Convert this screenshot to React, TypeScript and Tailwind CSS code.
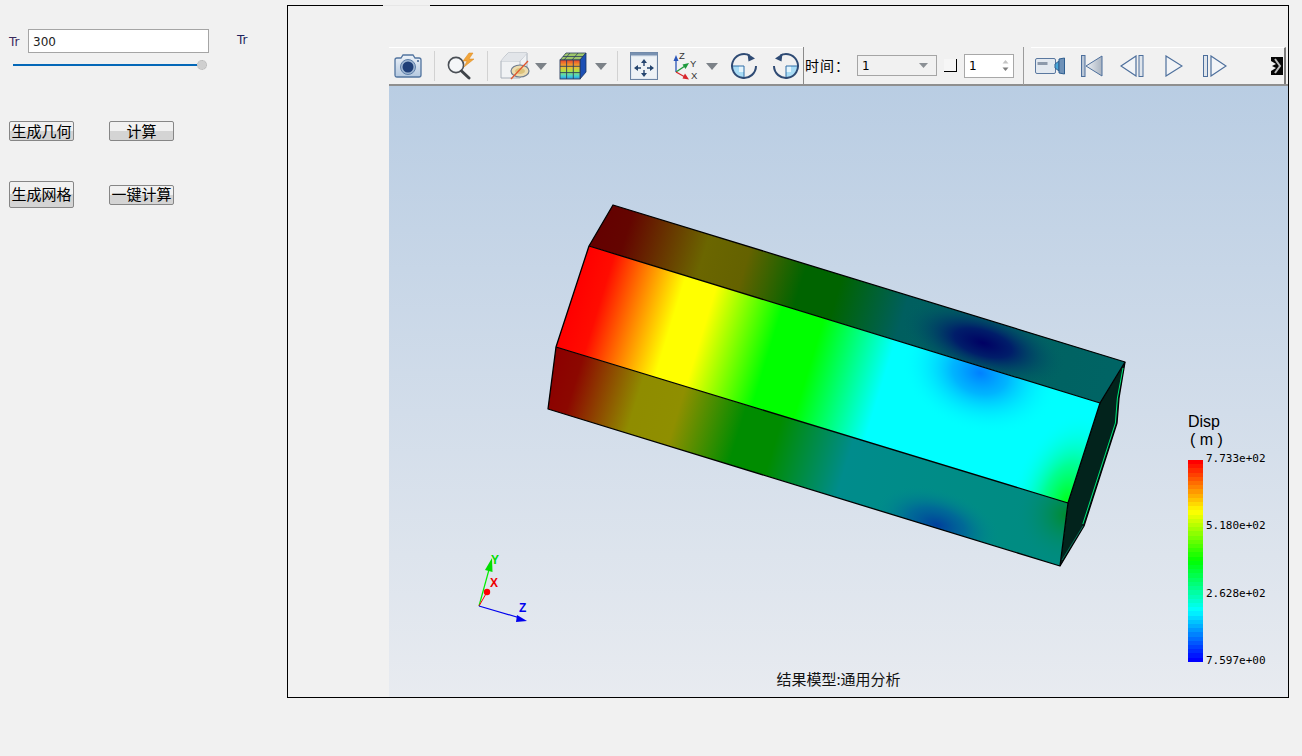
import React from 'react';

const cjk = "font-['Noto_Sans_CJK_SC','Liberation_Sans',sans-serif]";

const bandColor = (t: number) => {
  // t: 0 at the top (red), 1 at the bottom (blue)
  const s = Math.min(t * 4, 3.999);
  const k = s - Math.floor(s);
  const v = Math.round(k * 255);
  if (s < 1) return `rgb(255,${v},0)`;
  if (s < 2) return `rgb(${255 - v},255,0)`;
  if (s < 3) return `rgb(0,255,${v})`;
  return `rgb(0,${255 - v},255)`;
};

const bands = Array.from({ length: 48 }, (_, i) => bandColor(i / 47));

const Sep = ({ className = '' }: { className?: string }) => (
  <div className={`w-px h-[30px] bg-[#d2d2d2] shrink-0 ${className}`} />
);

const Caret = ({ className = '' }: { className?: string }) => (
  <svg viewBox="0 0 12 7" className={`w-[12px] h-[7px] shrink-0 ${className}`}>
    <path d="M0 0H12L6 7Z" fill="#7c8288" />
  </svg>
);

const CameraIcon = () => (
  <svg viewBox="0 0 28 26" className="w-[28px] h-[26px] ml-[5px] shrink-0">
    <defs>
      <linearGradient id="camBody" x1="0" y1="0" x2="0" y2="1">
        <stop offset="0" stopColor="#eef3f9" />
        <stop offset="1" stopColor="#b4c8df" />
      </linearGradient>
    </defs>
    <path d="M1 7q0-2 2-2h4l2-3h10l2 3h4q2 0 2 2v15q0 2-2 2H3q-2 0-2-2Z" fill="url(#camBody)" stroke="#52749f" strokeWidth="1.3" />
    <circle cx="14" cy="14" r="7.5" fill="#9fb6d2" stroke="#5d7ea8" />
    <circle cx="14" cy="14" r="5.5" fill="#1f3f78" />
    <circle cx="24" cy="8" r="1" fill="#3d5f8e" />
  </svg>
);

const SearchBoltIcon = () => (
  <svg viewBox="0 0 30 28" className="w-[30px] h-[28px] ml-[12px] shrink-0">
    <circle cx="9" cy="13" r="7.6" fill="#f4f6f8" stroke="#4a4f55" strokeWidth="1.6" />
    <path d="M14.5 19 L22 26" stroke="#3f4348" strokeWidth="3" strokeLinecap="round" />
    <path d="M22 1 L16 9 H20 L17 15 L27 7 H22 L26 1 Z" fill="#f2a53a" stroke="#d9861c" strokeWidth=".5" />
  </svg>
);

const ClipCubeIcon = () => (
  <svg viewBox="0 0 30 28" className="w-[30px] h-[28px] ml-[12px] shrink-0">
    <path d="M1 9 L8 1 H27 V18 L20 26 H1 Z" fill="#f0f2f4" stroke="#a8b0ba" />
    <path d="M1 9 H20 V26 M20 9 L27 1" fill="none" stroke="#b8bfc8" />
    <path d="M1 9 L8 1 H27 L20 9 Z" fill="#e2e5e9" />
    <ellipse cx="20" cy="19" rx="9" ry="6" fill="#ecdcae" stroke="#6f7c8d" strokeWidth="1.2" />
    <ellipse cx="20" cy="19" rx="5" ry="3" fill="#dcc27c" />
    <path d="M28 9 L11 27" stroke="#e0562e" strokeWidth="1.3" />
  </svg>
);

const ColorCubeIcon = () => (
  <svg viewBox="0 0 28 28" className="w-[28px] h-[28px] shrink-0">
    <defs>
      <linearGradient id="cubeFront" x1="0" y1="0" x2="0" y2="1">
        <stop offset="0" stopColor="#e8432c" />
        <stop offset=".35" stopColor="#f4b62e" />
        <stop offset=".6" stopColor="#a5e34a" />
        <stop offset=".85" stopColor="#3fd0d8" />
        <stop offset="1" stopColor="#2a8ae0" />
      </linearGradient>
    </defs>
    <path d="M7 1 H27 L21 8 H1 Z" fill="#9ec66a" stroke="#2d3f5f" strokeWidth=".8" />
    <path d="M11 1 L5 8 M19 1 L13 8 M4 4.5 H24" stroke="#2d3f5f" strokeWidth=".8" />
    <path d="M21 8 L27 1 V20 L21 27 Z" fill="#1c4fb4" stroke="#17325f" strokeWidth=".8" />
    <rect x="1" y="8" width="20" height="19" fill="url(#cubeFront)" stroke="#2d3f5f" strokeWidth=".9" />
    <path d="M7.6 8 V27 M14.3 8 V27 M1 14.3 H21 M1 20.6 H21" stroke="#2d3f5f" strokeWidth=".9" />
  </svg>
);

const FitIcon = () => (
  <svg viewBox="0 0 28 28" className="w-[28px] h-[28px] ml-[12px] shrink-0">
    <rect x=".5" y=".5" width="27" height="27" fill="#e2e9f1" stroke="#6b83a3" />
    <rect x=".5" y=".5" width="27" height="3" fill="#7891b1" />
    <rect x="2" y="5" width="24" height="21" fill="#eef2f6" />
    <path d="M14 7 L11 11 H17 Z M14 25 L11 21 H17 Z M4 16 L8 13 V19 Z M24 16 L20 13 V19 Z" fill="#25456f" />
    <path d="M14 11 V14 M14 18 V21 M8 16 H11 M17 16 H20" stroke="#25456f" strokeWidth="1.4" />
  </svg>
);

const AxesIcon = () => (
  <svg viewBox="0 -2 26 32" className="w-[26px] h-[32px] ml-[15px] shrink-0">
    <path d="M3 20 V8" stroke="#2a55b8" strokeWidth="1.3" />
    <path d="M3 3 L0.5 9 H5.5 Z" fill="#2a55b8" />
    <path d="M3 20 L12 14" stroke="#1e9a3c" strokeWidth="1.3" />
    <path d="M16 11 L9.5 12.5 L12.5 17 Z" fill="#1e9a3c" />
    <path d="M3 20 L12 25" stroke="#d8262c" strokeWidth="1.3" />
    <path d="M16 27.5 L9.5 26.5 L12 21.5 Z" fill="#d8262c" />
    <text x="6" y="7" fontSize="9.5" fill="#333" fontFamily="Liberation Sans, sans-serif">Z</text>
    <text x="17" y="15" fontSize="9.5" fill="#333" fontFamily="Liberation Sans, sans-serif">Y</text>
    <text x="18" y="27" fontSize="9.5" fill="#333" fontFamily="Liberation Sans, sans-serif">X</text>
  </svg>
);

const RotateIcon = ({ mirrored, className = '' }: { mirrored?: boolean; className?: string }) => (
  <svg viewBox="0 0 28 28" className={`w-[28px] h-[28px] shrink-0 ${className}`}>
    <g transform={mirrored ? 'translate(28 0) scale(-1 1)' : undefined}>
      <path d="M14 14 H2 A12 12 0 0 0 14 26 Z" fill="#a9dcf5" />
      <path d="M9 14 H14 V20 H9 Z" fill="#e4f5fd" />
      <path d="M2 14 H14 V26" fill="none" stroke="#2f6ea8" strokeWidth="1" />
      <path d="M19.5 3.3 A12 12 0 1 0 26 14" fill="none" stroke="#2f4b74" strokeWidth="2" />
      <path d="M17.5 1.5 L25 6.5 L18.5 9.5 Z" fill="#2f4b74" />
    </g>
  </svg>
);

const RecordIcon = () => (
  <svg viewBox="0 0 30 18" className="w-[30px] h-[18px] ml-[4px] shrink-0">
    <rect x=".5" y="1.5" width="20" height="15" rx="1.5" fill="#e3e9f0" stroke="#5a789f" />
    <rect x="2.5" y="5" width="10" height="3" fill="#8d9aab" />
    <path d="M20 7 L24 4 V14 L20 11 Z" fill="#4aa6d8" stroke="#2f5f90" />
    <path d="M24 2 L29.5 1 V17 L24 16 Z" fill="#6f92b8" stroke="#2f5f90" />
  </svg>
);

const navStroke = '#4d6f9c';

const FirstIcon = () => (
  <svg viewBox="0 0 22 22" className="w-[22px] h-[22px] ml-[16px] shrink-0">
    <defs>
      <linearGradient id="navFill" x1="0" y1="0" x2="1" y2="0">
        <stop offset="0" stopColor="#eef1f5" />
        <stop offset="1" stopColor="#a9b3c0" />
      </linearGradient>
    </defs>
    <rect x=".5" y=".5" width="3.5" height="21" fill="#b9c6d6" stroke={navStroke} />
    <path d="M5 11 L21 1 V21 Z" fill="url(#navFill)" stroke={navStroke} />
  </svg>
);

const BackIcon = () => (
  <svg viewBox="0 0 24 22" className="w-[24px] h-[22px] ml-[17px] shrink-0">
    <path d="M1 11 L16 1 V21 Z" fill="#f2f4f7" stroke={navStroke} strokeWidth="1.2" />
    <rect x="19" y=".5" width="4" height="21" fill="#dfe5ec" stroke={navStroke} />
  </svg>
);

const PlayIcon = () => (
  <svg viewBox="0 0 18 22" className="w-[18px] h-[22px] ml-[21px] shrink-0">
    <path d="M1 1 L17 11 L1 21 Z" fill="#f2f4f7" stroke={navStroke} strokeWidth="1.2" />
  </svg>
);

const NextIcon = () => (
  <svg viewBox="0 0 24 22" className="w-[24px] h-[22px] ml-[20px] shrink-0">
    <rect x=".5" y=".5" width="4" height="21" fill="#dfe5ec" stroke={navStroke} />
    <path d="M8 1 L23 11 L8 21 Z" fill="#f2f4f7" stroke={navStroke} strokeWidth="1.2" />
  </svg>
);

const Toolbar = () => (
  <div className="flex h-[39px] shrink-0 bg-[#f1f1f1] border-b-2 border-[#8f8f8f]">
    <div className="flex items-center w-[414px] shrink-0 border-t border-white">
      <CameraIcon />
      <Sep className="ml-[12px]" />
      <SearchBoltIcon />
      <Sep className="ml-[10px]" />
      <ClipCubeIcon />
      <Caret className="ml-[5px]" />
      <div className="w-[12px] shrink-0" />
      <ColorCubeIcon />
      <Caret className="ml-[8px]" />
      <Sep className="ml-[10px]" />
      <FitIcon />
      <AxesIcon />
      <Caret className="ml-[7px]" />
      <RotateIcon className="ml-[12px]" />
      <RotateIcon mirrored className="ml-[14px]" />
    </div>
    <div className="flex items-center w-[220px] shrink-0 border-l border-[#8a8a8a]">
      <span className={`${cjk} text-[14px] tracking-[1px] text-black ml-[1px] w-[52px] shrink-0`}>时间：</span>
      <div className="flex items-center justify-between w-[80px] h-[21px] border border-[#a5a5a5] px-[4px] shrink-0">
        <span className="font-['DejaVu_Sans',sans-serif] text-[12px] text-black">1</span>
        <svg viewBox="0 0 9 5" className="w-[9px] h-[5px] mr-[4px]">
          <path d="M0 0H9L4.5 5Z" fill="#8a8f94" />
        </svg>
      </div>
      <div className="w-[13px] h-[13px] ml-[7px] shrink-0 bg-[#f6f6f6] border-r border-b border-black" />
      <div className="flex items-center justify-between w-[50px] h-[24px] ml-[7px] bg-white border border-[#a8a8a8] pl-[4px] pr-[4px] shrink-0">
        <span className="font-['DejaVu_Sans',sans-serif] text-[12px] text-black">1</span>
        <svg viewBox="0 0 7 13" className="w-[7px] h-[13px]">
          <path d="M3.5 1 L6.5 4.5 H.5 Z" fill="#c4c4c4" />
          <path d="M.5 8.5 H6.5 L3.5 12 Z" fill="#7e7e7e" />
        </svg>
      </div>
      <div className="w-px h-[38px] ml-[9px] bg-[#9c9c9c] shrink-0" />
    </div>
    <div className="flex items-center w-[255px] ml-[8px] shrink-0 border-t border-white border-r-2 border-r-[#7a7a7a]">
      <RecordIcon />
      <FirstIcon />
      <BackIcon />
      <PlayIcon />
      <NextIcon />
      <svg viewBox="0 0 12 18" className="w-[12px] h-[18px] ml-auto mr-[1px] shrink-0">
        <path d="M0 0H12V18H0V14L5 11 L1 9 L5 7 L0 4Z" fill="#050505" />
        <path d="M4 2 L9 9 L4 16" fill="none" stroke="#bdbdbd" strokeWidth="2" />
      </svg>
    </div>
  </div>
);

// 3D result model, drawn in page coordinates through the viewBox
const ResultModel = () => (
  <svg viewBox="389 86 899 611" className="absolute inset-0 w-full h-full">
    <defs>
      <linearGradient id="frontFace" gradientUnits="userSpaceOnUse" x1="589" y1="246" x2="1100" y2="403">
        <stop offset="0" stopColor="#ff0000" />
        <stop offset=".05" stopColor="#ff0c00" />
        <stop offset=".19" stopColor="#ffff00" />
        <stop offset=".25" stopColor="#ffff00" />
        <stop offset=".38" stopColor="#00ff00" />
        <stop offset=".46" stopColor="#00ff00" />
        <stop offset=".6" stopColor="#00ffff" />
        <stop offset="1" stopColor="#00ffff" />
      </linearGradient>
      <linearGradient id="topFace" gradientUnits="userSpaceOnUse" x1="589" y1="246" x2="1100" y2="403">
        <stop offset="0" stopColor="#640000" />
        <stop offset=".06" stopColor="#640500" />
        <stop offset=".21" stopColor="#6b6600" />
        <stop offset=".29" stopColor="#646200" />
        <stop offset=".4" stopColor="#006400" />
        <stop offset=".47" stopColor="#006400" />
        <stop offset=".6" stopColor="#005f5f" />
        <stop offset="1" stopColor="#006464" />
      </linearGradient>
      <linearGradient id="bottomFace" gradientUnits="userSpaceOnUse" x1="589" y1="246" x2="1100" y2="403">
        <stop offset="0" stopColor="#8c0000" />
        <stop offset=".05" stopColor="#8c0800" />
        <stop offset=".17" stopColor="#8f8c00" />
        <stop offset=".25" stopColor="#8f8f00" />
        <stop offset=".37" stopColor="#008c00" />
        <stop offset=".44" stopColor="#008c00" />
        <stop offset=".58" stopColor="#008c8c" />
        <stop offset="1" stopColor="#008c80" />
      </linearGradient>
      <radialGradient id="frontSpot" gradientUnits="userSpaceOnUse" cx="980" cy="373" r="62" gradientTransform="translate(980 373) rotate(17) scale(1.3 .95) translate(-980 -373)">
        <stop offset="0" stopColor="#0080ff" />
        <stop offset=".35" stopColor="#00a8ff" stopOpacity=".85" />
        <stop offset="1" stopColor="#00ffff" stopOpacity="0" />
      </radialGradient>
      <radialGradient id="frontCorner" gradientUnits="userSpaceOnUse" cx="1066" cy="500" r="70" gradientTransform="translate(1066 500) rotate(-72) scale(1.3 .8) translate(-1066 -500)">
        <stop offset="0" stopColor="#00ff20" />
        <stop offset=".4" stopColor="#00ff80" stopOpacity=".85" />
        <stop offset="1" stopColor="#00ffff" stopOpacity="0" />
      </radialGradient>
      <radialGradient id="topSpot" gradientUnits="userSpaceOnUse" cx="983" cy="343" r="85" gradientTransform="translate(983 343) rotate(17) scale(1 .42) translate(-983 -343)">
        <stop offset="0" stopColor="#000064" />
        <stop offset=".35" stopColor="#001a6a" stopOpacity=".95" />
        <stop offset="1" stopColor="#005f64" stopOpacity="0" />
      </radialGradient>
      <radialGradient id="bottomSpot" gradientUnits="userSpaceOnUse" cx="937" cy="525" r="65" gradientTransform="translate(937 525) rotate(17) scale(1 .55) translate(-937 -525)">
        <stop offset="0" stopColor="#003f9c" />
        <stop offset=".45" stopColor="#005f9c" stopOpacity=".75" />
        <stop offset="1" stopColor="#008c8c" stopOpacity="0" />
      </radialGradient>
      <radialGradient id="bottomCorner" gradientUnits="userSpaceOnUse" cx="1066" cy="515" r="50">
        <stop offset="0" stopColor="#008c30" />
        <stop offset="1" stopColor="#008c80" stopOpacity="0" />
      </radialGradient>
      <clipPath id="frontClip"><path d="M589 246 L1100 403 L1068 503 L556 347 Z" /></clipPath>
      <clipPath id="topClip"><path d="M613 205 L1125 362 L1100 403 L589 246 Z" /></clipPath>
      <clipPath id="bottomClip"><path d="M556 347 L1068 503 L1060 566 L548 409 Z" /></clipPath>
    </defs>

    <path d="M1125 362 L1119 398 L1117 423 L1084 526 L1060 566 L1068 503 L1100 403 Z" fill="#02231c" />

    <path d="M613 205 L1125 362 L1100 403 L589 246 Z" fill="url(#topFace)" />
    <g clipPath="url(#topClip)"><rect x="850" y="250" width="280" height="160" fill="url(#topSpot)" /></g>

    <path d="M589 246 L1100 403 L1068 503 L556 347 Z" fill="url(#frontFace)" />
    <g clipPath="url(#frontClip)">
      <rect x="850" y="300" width="260" height="210" fill="url(#frontSpot)" />
      <rect x="950" y="380" width="160" height="130" fill="url(#frontCorner)" />
    </g>

    <path d="M556 347 L1068 503 L1060 566 L548 409 Z" fill="url(#bottomFace)" />
    <g clipPath="url(#bottomClip)">
      <rect x="840" y="470" width="200" height="100" fill="url(#bottomSpot)" />
      <rect x="1010" y="480" width="60" height="90" fill="url(#bottomCorner)" />
    </g>

    <g fill="none" stroke="#000" strokeWidth="1.3" strokeLinejoin="round">
      <path d="M613 205 L1125 362 L1119 398 L1117 423 L1084 526 L1060 566 L548 409 L556 347 L589 246 Z" />
      <path d="M589 246 L1100 403 L1068 503 L556 347" />
      <path d="M1125 362 L1100 403 M1068 503 L1060 566" />
    </g>
    <path d="M1123 368 L1117.4 398 L1115.4 423 L1082.8 524" fill="none" stroke="#00e67a" strokeWidth="1" />
    <path d="M1083 526 L1062 560" fill="none" stroke="#0b6b55" strokeWidth="1" />

    {/* axis triad */}
    <path d="M479 606 L490 566" stroke="#00ee00" strokeWidth="1.2" />
    <path d="M492 558 L485 570 L492.5 572 Z" fill="#00dd00" />
    <path d="M479 606 L487 592" stroke="#ff0000" strokeWidth="1" />
    <circle cx="487" cy="592" r="3.2" fill="#ff0000" />
    <path d="M479 606 L520 618" stroke="#0000ee" strokeWidth="1.2" />
    <path d="M527 621 L517 615 L516 622 Z" fill="#0000ee" />
    <text x="491" y="564" fontSize="12" fontWeight="700" fill="#00dd00" fontFamily="Liberation Sans, sans-serif">Y</text>
    <text x="490" y="587" fontSize="12" fontWeight="700" fill="#ee0000" fontFamily="Liberation Sans, sans-serif">X</text>
    <text x="519" y="612" fontSize="12" fontWeight="700" fill="#0000ee" fontFamily="Liberation Sans, sans-serif">Z</text>
  </svg>
);

const Legend = () => (
  <div className="absolute left-[799px] top-[326px] w-[90px]">
    <div className="font-['Liberation_Sans',sans-serif] text-[16px] leading-[19px] text-black">Disp</div>
    <div className="font-['Liberation_Sans',sans-serif] text-[16px] leading-[18px] text-black ml-[2px]">( m )</div>
    <div className="flex mt-[11px]">
      <div className="flex flex-col w-[15px] h-[202px] shrink-0">
        {bands.map((c, i) => (
          <div key={i} className="flex-1" style={{ backgroundColor: c }} />
        ))}
      </div>
      <div className="flex flex-col justify-between h-[216px] -mt-[8px] ml-[3px] font-['DejaVu_Sans_Mono',monospace] text-[11px] leading-[14px] text-black">
        <span>7.733e+02</span>
        <span>5.180e+02</span>
        <span>2.628e+02</span>
        <span>7.597e+00</span>
      </div>
    </div>
  </div>
);

const ActionButton = ({ label, className = '' }: { label: string; className?: string }) => (
  <button
    className={`${cjk} w-[65px] pb-[2px] text-[15px] leading-none text-black whitespace-nowrap border border-[#868686] rounded-[2px] bg-linear-to-b from-[#f1f1f1] from-50% to-[#d4d4d4] to-50% ${className}`}
  >
    {label}
  </button>
);

const App = () => {
  return (
    <div className="flex w-[1302px] h-[756px] bg-[#f1f1f1] overflow-hidden">
      <div className="w-[287px] shrink-0 pl-[9px] pt-[29px]">
        <div className="flex items-center">
          <span className="w-[19px] mt-[2px] font-['DejaVu_Sans',sans-serif] text-[12px] text-[#3a2a5c]">Tr</span>
          <div className="flex items-center w-[181px] h-[24px] bg-white border border-[#a5a5a5] pl-[4px] pt-[1px] font-['DejaVu_Sans',sans-serif] text-[12px] text-[#222]">
            300
          </div>
          <span className="ml-[28px] -mt-[3px] font-['DejaVu_Sans',sans-serif] text-[12px] text-[#1f1f5c]">Tr</span>
        </div>
        <div className="flex items-center ml-[4px] mt-[6px] h-[11px]">
          <div className="w-[184px] h-[2px] bg-[#0468b8]" />
          <div className="w-[10px] h-[10px] rounded-full bg-[#cfcfcf] border border-dotted border-[#b4b4b4]" />
        </div>
        <div className="flex gap-[35px] items-start mt-[51px]">
          <ActionButton label="生成几何" className="h-[20px]" />
          <ActionButton label="计算" className="h-[20px]" />
        </div>
        <div className="flex gap-[35px] items-center mt-[40px]">
          <ActionButton label="生成网格" className="h-[27px]" />
          <ActionButton label="一键计算" className="h-[20px]" />
        </div>
      </div>
      <div className="relative flex flex-col w-[1002px] h-[693px] mt-[5px] border border-black pt-[41px] pl-[101px]">
        <div className="absolute -top-px left-[95px] w-[47px] h-px bg-[#e6e6e6]" />
        <Toolbar />
        <div className="relative flex-1 bg-linear-to-b from-[#b9cde3] to-[#e8ebf0]">
          <ResultModel />
          <Legend />
          <div className={`${cjk} absolute left-0 right-0 bottom-[8px] text-center text-[15px] leading-[20px] text-[#111]`}>
            结果模型:通用分析
          </div>
        </div>
      </div>
    </div>
  );
};

export default App;
